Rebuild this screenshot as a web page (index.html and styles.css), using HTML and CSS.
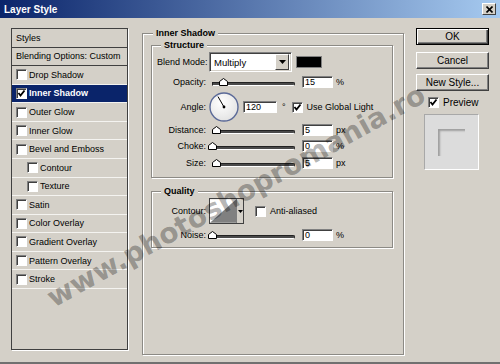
FILE: index.html
```html
<!DOCTYPE html>
<html lang="en">
<head>
    <meta charset="UTF-8">
    <title>Layer Style</title>
    <link rel="stylesheet" href="styles.css">
</head>
<body>
    <div class="dialog">
        <!-- Title bar -->
        <div class="titlebar">
            <span class="title">Layer Style</span>
            <span class="close">
                <svg width="7" height="7" viewBox="0 0 7 7"><path d="M0.5 0.5 L6.5 6.5 M6.5 0.5 L0.5 6.5" stroke="#000" stroke-width="1.6"/></svg>
            </span>
        </div>

        <div class="content">
            <!-- Styles list -->
            <ul class="styles-list">
                <li class="item head">Styles</li>
                <li class="item head">Blending Options: Custom</li>
                <li class="item"><span class="cb"></span>Drop Shadow</li>
                <li class="item selected"><span class="cb checked"><svg width="9" height="9" viewBox="0 0 9 9"><path d="M1.5 4 L3.5 6.5 L7.5 1.5" fill="none" stroke="#000" stroke-width="1.8"/></svg></span>Inner Shadow</li>
                <li class="item"><span class="cb"></span>Outer Glow</li>
                <li class="item"><span class="cb"></span>Inner Glow</li>
                <li class="item"><span class="cb"></span>Bevel and Emboss</li>
                <li class="item sub"><span class="cb"></span>Contour</li>
                <li class="item sub"><span class="cb"></span>Texture</li>
                <li class="item"><span class="cb"></span>Satin</li>
                <li class="item"><span class="cb"></span>Color Overlay</li>
                <li class="item"><span class="cb"></span>Gradient Overlay</li>
                <li class="item"><span class="cb"></span>Pattern Overlay</li>
                <li class="item"><span class="cb"></span>Stroke</li>
            </ul>

            <!-- Settings -->
            <fieldset class="group main">
                <legend>Inner Shadow</legend>

                <fieldset class="group structure">
                    <legend>Structure</legend>

                    <div class="row blend-row">
                        <span class="lbl">Blend Mode:</span>
                        <div class="select">
                            <span class="select-text">Multiply</span>
                            <span class="select-btn"><svg width="7" height="4" viewBox="0 0 7 4"><path d="M0 0 H7 L3.5 4 Z" fill="#000"/></svg></span>
                        </div>
                        <span class="swatch"></span>
                    </div>

                    <div class="row opacity-row">
                        <span class="lbl">Opacity:</span>
                        <div class="slider"><div class="track"></div><svg class="thumb" style="left: 10px" width="9" height="8" viewBox="0 0 9 8"><path d="M0.5 7.5 V3.5 L4.5 0.5 L8.5 3.5 V7.5 Z" fill="#fff" stroke="#000"/></svg></div>
                        <span class="field">15</span>
                        <span class="unit">%</span>
                    </div>

                    <div class="row angle-row">
                        <span class="lbl">Angle:</span>
                        <svg class="dial" width="30" height="30" viewBox="0 0 30 30">
                            <defs>
                                <radialGradient id="dialFill" cx="0.4" cy="0.35" r="0.7">
                                    <stop offset="0" stop-color="#ffffff"/>
                                    <stop offset="1" stop-color="#e2e2e2"/>
                                </radialGradient>
                            </defs>
                            <circle cx="15" cy="15" r="14" fill="url(#dialFill)" stroke="#5b6a98" stroke-width="1.4"/>
                            <path d="M15 15 L9 4.6" stroke="#000" stroke-width="1"/>
                            <circle cx="15" cy="15" r="1.4" fill="#000"/>
                        </svg>
                        <span class="field wide">120</span>
                        <span class="deg">°</span>
                        <span class="cb checked"><svg width="9" height="9" viewBox="0 0 9 9"><path d="M1.5 4 L3.5 6.5 L7.5 1.5" fill="none" stroke="#000" stroke-width="1.8"/></svg></span>
                        <span class="cb-text">Use Global Light</span>
                    </div>

                    <div class="row dist-row">
                        <span class="lbl">Distance:</span>
                        <div class="slider"><div class="track"></div><svg class="thumb" style="left: 3px" width="9" height="8" viewBox="0 0 9 8"><path d="M0.5 7.5 V3.5 L4.5 0.5 L8.5 3.5 V7.5 Z" fill="#fff" stroke="#000"/></svg></div>
                        <span class="field">5</span>
                        <span class="unit">px</span>
                    </div>

                    <div class="row choke-row">
                        <span class="lbl">Choke:</span>
                        <div class="slider"><div class="track"></div><svg class="thumb" style="left: -1px" width="9" height="8" viewBox="0 0 9 8"><path d="M0.5 7.5 V3.5 L4.5 0.5 L8.5 3.5 V7.5 Z" fill="#fff" stroke="#000"/></svg></div>
                        <span class="field">0</span>
                        <span class="unit">%</span>
                    </div>

                    <div class="row size-row">
                        <span class="lbl">Size:</span>
                        <div class="slider"><div class="track"></div><svg class="thumb" style="left: 3px" width="9" height="8" viewBox="0 0 9 8"><path d="M0.5 7.5 V3.5 L4.5 0.5 L8.5 3.5 V7.5 Z" fill="#fff" stroke="#000"/></svg></div>
                        <span class="field">5</span>
                        <span class="unit">px</span>
                    </div>
                </fieldset>

                <fieldset class="group quality">
                    <legend>Quality</legend>

                    <div class="row contour-row">
                        <span class="lbl">Contour:</span>
                        <div class="contour">
                            <svg class="contour-curve" width="27" height="24" viewBox="0 0 27 24"><rect width="27" height="24" fill="#fff"/><path d="M0 24 L27 0 V24 Z" fill="#808080"/></svg>
                            <span class="contour-btn"><svg width="5" height="3" viewBox="0 0 5 3"><path d="M0 0 H5 L2.5 3 Z" fill="#000"/></svg></span>
                        </div>
                        <span class="cb aa"></span>
                        <span class="cb-text">Anti-aliased</span>
                    </div>

                    <div class="row noise-row">
                        <span class="lbl">Noise:</span>
                        <div class="slider"><div class="track"></div><svg class="thumb" style="left: -1px" width="9" height="8" viewBox="0 0 9 8"><path d="M0.5 7.5 V3.5 L4.5 0.5 L8.5 3.5 V7.5 Z" fill="#fff" stroke="#000"/></svg></div>
                        <span class="field">0</span>
                        <span class="unit">%</span>
                    </div>
                </fieldset>
            </fieldset>

            <!-- Buttons -->
            <div class="actions">
                <button class="btn default">OK</button>
                <button class="btn cancel">Cancel</button>
                <button class="btn new-style">New Style...</button>
                <div class="preview-check">
                    <span class="cb checked"><svg width="9" height="9" viewBox="0 0 9 9"><path d="M1.5 4 L3.5 6.5 L7.5 1.5" fill="none" stroke="#000" stroke-width="1.8"/></svg></span>
                    <span>Preview</span>
                </div>
                <div class="preview">
                    <div class="preview-square"></div>
                </div>
            </div>
        </div>

        <div class="watermark">www.photoshopromania.ro</div>
    </div>
</body>
</html>
```

FILE: styles.css
```css
* {
    box-sizing: border-box;
}

body {
    margin: 0;
    background: #d4d0c8;
    font-family: "Liberation Sans", Arial, sans-serif;
    font-size: 9px;
    color: #000;
}

.dialog {
    position: relative;
    width: 500px;
    height: 364px;
    overflow: hidden;
    border-bottom: 2px solid #707070;
}

/* Title bar */
.titlebar {
    height: 18px;
    display: flex;
    align-items: center;
    justify-content: space-between;
    padding: 0 4px 0 4px;
    background: linear-gradient(to right, #0a246a, #a6caf0);
}

.title {
    color: #fff;
    font-weight: bold;
    font-size: 10px;
}

.close {
    width: 14px;
    height: 12px;
    display: flex;
    align-items: center;
    justify-content: center;
    background: #d4d0c8;
    border: 1px solid;
    border-color: #fff #404040 #404040 #fff;
}

.content {
    display: flex;
    align-items: flex-start;
    padding: 10px 0 0 11px;
}

/* Styles list */
.styles-list {
    list-style: none;
    margin: 0;
    padding: 0;
    width: 117px;
    height: 322px;
    border: 1px solid #404040;
    box-shadow: 1px 1px 0 #fff;
}

.item {
    height: 18.57px;
    display: flex;
    align-items: center;
    padding-left: 4px;
    border-bottom: 1px solid #f4f3f0;
    white-space: nowrap;
}

.item.head {
    border-bottom-color: #404040;
}

.item.sub {
    padding-left: 15px;
}

.item.selected {
    background: #0a246a;
    color: #fff;
    font-weight: bold;
}

.item .cb {
    margin-right: 2px;
}

/* Checkbox */
.cb {
    width: 11px;
    height: 11px;
    flex: none;
    display: flex;
    align-items: center;
    justify-content: center;
    background: #fff;
    border: 1px solid;
    border-color: #808080 #fff #fff #808080;
    box-shadow: inset 1px 1px 0 #404040;
}

/* Group boxes */
.group {
    margin: 0;
    min-width: 0;
    border: 1px solid #8c8a85;
    box-shadow: inset 1px 1px 0 #fff, 1px 1px 0 #fff;
}

.group legend {
    font-weight: bold;
    line-height: 11px;
    padding: 0 3px;
    background: #d4d0c8;
}

.main {
    margin-left: 14px;
    width: 262px;
    height: 327px;
    padding: 1px 10px 0 8px;
}

.main > legend {
    margin-left: 2px;
}

.structure {
    height: 138px;
    padding: 0 4px 0 5px;
}

.structure > legend,
.quality > legend {
    margin-left: 4px;
}

.quality {
    margin-top: 8px;
    height: 62px;
    padding: 0 4px 0 5px;
}

/* Rows */
.row {
    display: flex;
    align-items: center;
    white-space: nowrap;
}

.lbl {
    width: 49px;
    margin-right: 3px;
    text-align: right;
    flex: none;
}

.blend-row {
    margin-top: 1px;
    height: 20px;
}

.opacity-row {
    height: 20px;
}

.angle-row {
    height: 30px;
}

.dist-row,
.choke-row {
    height: 16px;
}

.size-row {
    height: 17px;
}

.contour-row {
    margin-top: 1px;
    height: 26px;
}

.noise-row {
    margin-top: 4px;
    height: 14px;
}

/* Select */
.select {
    width: 83px;
    height: 20px;
    display: flex;
    align-items: center;
    justify-content: space-between;
    background: #fff;
    border: 1px solid;
    border-color: #808080 #fff #fff #808080;
    box-shadow: inset 1px 1px 0 #404040, inset -1px -1px 0 #d4d0c8;
    padding: 2px 2px 2px 4px;
    font-size: 9.5px;
}

.select-btn {
    width: 14px;
    height: 16px;
    display: flex;
    align-items: center;
    justify-content: center;
    background: #d4d0c8;
    border: 1px solid;
    border-color: #fff #404040 #404040 #fff;
}

.swatch {
    width: 26px;
    height: 12px;
    margin-left: 4px;
    background: #000;
    border: 1px solid #808080;
}

/* Sliders */
.slider {
    position: relative;
    width: 86px;
    height: 8px;
    flex: none;
}

.track {
    margin: 4px 0 0 3px;
    height: 4px;
    background: #4a4a4a;
    border: 1px solid #222;
    border-bottom-color: #fff;
    border-radius: 0 2px 2px 0;
}

.thumb {
    position: absolute;
    bottom: 0;
}

/* Text fields */
.field {
    width: 31px;
    height: 12px;
    margin-left: 7px;
    padding-left: 2px;
    display: flex;
    align-items: center;
    background: #fff;
    border: 1px solid;
    border-color: #808080 #fff #fff #808080;
    box-shadow: inset 1px 1px 0 #404040;
    flex: none;
}

.field.wide {
    width: 34px;
    margin-left: 4px;
}

.unit {
    margin-left: 3px;
}

.dial {
    flex: none;
}

.deg {
    margin-left: 5px;
}

.angle-row .cb {
    margin-left: 6px;
}

.cb-text {
    margin-left: 4px;
}

/* Contour picker */
.contour {
    width: 35px;
    height: 26px;
    display: flex;
    border: 1px solid #404040;
    flex: none;
}

.contour-curve {
    display: block;
}

.contour-btn {
    width: 7px;
    display: flex;
    align-items: center;
    justify-content: center;
    background: #d4d0c8;
    border-left: 1px solid #808080;
}

.cb.aa {
    margin-left: 11px;
}

/* Right column */
.actions {
    margin-left: 12px;
    width: 73px;
    display: flex;
    flex-direction: column;
}

.btn {
    display: block;
    width: 73px;
    height: 17px;
    padding: 0;
    background: #d4d0c8;
    border: 1px solid;
    border-color: #fff #404040 #404040 #fff;
    box-shadow: inset -1px -1px 0 #808080;
    font-family: "Liberation Sans", Arial, sans-serif;
    font-size: 10px;
    color: #000;
}

.btn.default {
    border-color: #000;
    box-shadow: inset 1px 1px 0 #fff, inset -1px -1px 0 #404040, inset -2px -2px 0 #808080;
}

.btn.cancel {
    margin-top: 7px;
}

.btn.new-style {
    margin-top: 5px;
}

.preview-check {
    margin: 6px 0 0 12px;
    display: flex;
    align-items: center;
    gap: 4px;
    font-size: 10px;
}

.preview {
    margin: 6px 0 0 8px;
    width: 55px;
    height: 56px;
    padding: 14px 0 0 13px;
    background: #dcdcdc;
    border: 1px solid;
    border-color: #a8a8a8 #fff #fff #a8a8a8;
}

.preview-square {
    width: 27px;
    height: 27px;
    box-shadow: inset 3px 3px 2px -1px rgba(0, 0, 0, 0.28);
}

/* Watermark overlay */
.watermark {
    position: absolute;
    left: 236px;
    top: 196px;
    transform: translate(-50%, -50%) rotate(-29deg);
    font-family: "DejaVu Sans", sans-serif;
    font-weight: bold;
    font-size: 28px;
    color: rgba(0, 0, 0, 0.3);
    white-space: nowrap;
    pointer-events: none;
}
```
